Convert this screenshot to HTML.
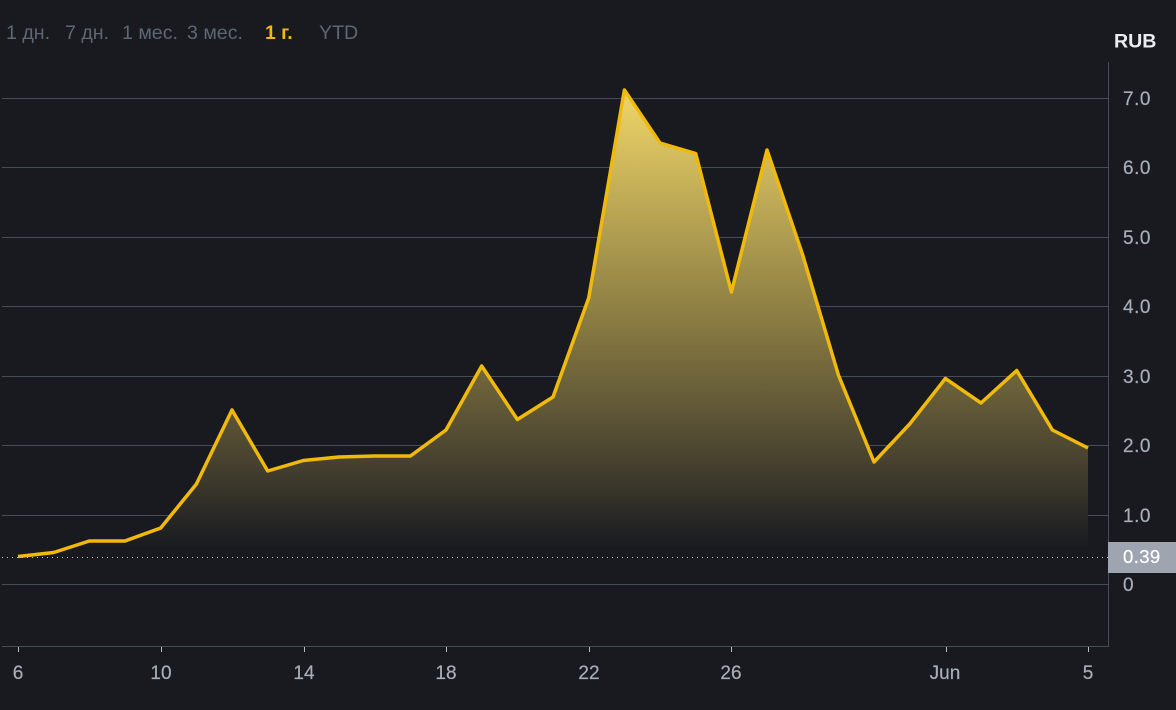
<!DOCTYPE html>
<html>
<head>
<meta charset="utf-8">
<style>
html,body{margin:0;padding:0;background:#181a20;}
body{width:1176px;height:710px;overflow:hidden;position:relative;}
svg{position:absolute;left:0;top:0;}
text{font-family:"Liberation Sans",sans-serif;}
.y{font-size:19px;fill:#a8aeb9;letter-spacing:.5px;stroke:#a8aeb9;stroke-width:.2px;}
.x{font-size:19px;fill:#a8aeb9;text-anchor:middle;stroke:#a8aeb9;stroke-width:.2px;}
.t{font-size:19.6px;fill:#5e6673;}
</style>
</head>
<body>
<svg width="1176" height="710" viewBox="0 0 1176 710">
<defs>
<linearGradient id="g" gradientUnits="userSpaceOnUse" x1="0" y1="90" x2="0" y2="548">
<stop offset="0" stop-color="#f0d668"/>
<stop offset="0.5" stop-color="#8a7c42" stop-opacity="1"/>
<stop offset="0.8" stop-color="#4a4430"/>
<stop offset="1" stop-color="#181a20"/>
</linearGradient>
</defs>
<rect width="1176" height="710" fill="#181a20"/>
<g fill="#474d57">
<rect x="2" y="98" width="1106" height="1"/>
<rect x="2" y="167" width="1106" height="1"/>
<rect x="2" y="237" width="1106" height="1"/>
<rect x="2" y="306" width="1106" height="1"/>
<rect x="2" y="376" width="1106" height="1"/>
<rect x="2" y="445" width="1106" height="1"/>
<rect x="2" y="515" width="1106" height="1"/>
<rect x="2" y="584" width="1106" height="1"/>
<rect x="2" y="646" width="1107" height="1"/>
<rect x="1108" y="62" width="1" height="585"/>
</g>
<polygon fill="url(#g)" points="18,556.5 53.7,552.5 89.3,541 125,541 160.7,528 196.4,484 232,410 267.7,471 303.4,460.5 339,457 374.7,456 410.4,456 446,430 481.7,366 517.4,419.5 553,397 588.7,298 624.4,90 660,143 695.7,153.5 731.4,292 767,150 802.7,255 838.4,375 874,462 909.7,424 945.4,378.5 981,403 1016.7,370.5 1052.4,430 1088,448 1088,548 18,548"/>
<line x1="2" y1="557.5" x2="1108" y2="557.5" stroke="#c4c9d1" stroke-width="1" stroke-dasharray="1 4"/>
<polyline fill="none" stroke="#f0b90b" stroke-width="3.5" stroke-linejoin="round" points="18,556.5 53.7,552.5 89.3,541 125,541 160.7,528 196.4,484 232,410 267.7,471 303.4,460.5 339,457 374.7,456 410.4,456 446,430 481.7,366 517.4,419.5 553,397 588.7,298 624.4,90 660,143 695.7,153.5 731.4,292 767,150 802.7,255 838.4,375 874,462 909.7,424 945.4,378.5 981,403 1016.7,370.5 1052.4,430 1088,448"/>
<g fill="#b7bdc6">
<rect x="18" y="647" width="1" height="5"/>
<rect x="161" y="647" width="1" height="5"/>
<rect x="304" y="647" width="1" height="5"/>
<rect x="446" y="647" width="1" height="5"/>
<rect x="589" y="647" width="1" height="5"/>
<rect x="731" y="647" width="1" height="5"/>
<rect x="946" y="647" width="1" height="5"/>
<rect x="1088" y="647" width="1" height="5"/>
</g>
<rect x="1108" y="542" width="68" height="31" fill="#9ea4b0"/>
<text x="1123" y="563" font-size="18.5" fill="#ffffff" stroke="#ffffff" stroke-width=".2" letter-spacing=".4">0.39</text>
<text x="1114" y="47.5" font-size="19.6" font-weight="700" fill="#eaecef">RUB</text>
<text class="y" x="1123" y="105">7.0</text>
<text class="y" x="1123" y="174">6.0</text>
<text class="y" x="1123" y="244">5.0</text>
<text class="y" x="1123" y="313">4.0</text>
<text class="y" x="1123" y="383">3.0</text>
<text class="y" x="1123" y="452">2.0</text>
<text class="y" x="1123" y="522">1.0</text>
<text class="y" x="1123" y="591">0</text>
<text class="x" x="18" y="679">6</text>
<text class="x" x="161" y="679">10</text>
<text class="x" x="304" y="679">14</text>
<text class="x" x="446" y="679">18</text>
<text class="x" x="589" y="679">22</text>
<text class="x" x="731" y="679">26</text>
<text class="x" x="945" y="679">Jun</text>
<text class="x" x="1088" y="679">5</text>
<text class="t" x="6" y="39">1 дн.</text>
<text class="t" x="65" y="39">7 дн.</text>
<text class="t" x="122" y="39">1 мес.</text>
<text class="t" x="187" y="39">3 мес.</text>
<text x="265" y="39" font-size="19.4" font-weight="700" fill="#f0b90b">1 г.</text>
<text class="t" x="319" y="39">YTD</text>
</svg>
</body>
</html>
